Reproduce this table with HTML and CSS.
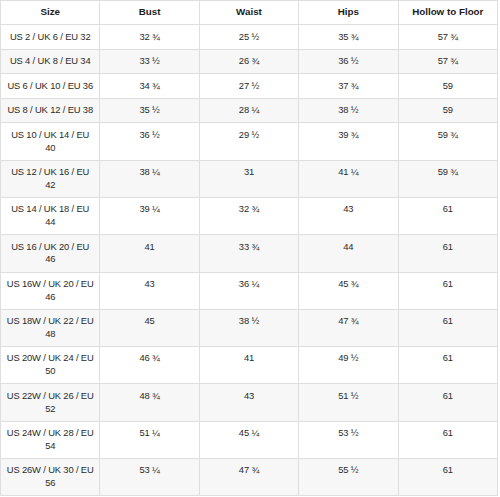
FILE: index.html
```html
<!DOCTYPE html>
<html>
<head>
<meta charset="utf-8">
<link rel="stylesheet" href="styles.css">
</head>
<body>
<table class="chart">
  <thead>
    <tr><th>Size</th><th>Bust</th><th>Waist</th><th>Hips</th><th>Hollow to Floor</th></tr>
  </thead>
  <tbody>
    <tr><td>US 2 / UK 6 / EU 32</td><td>32 ¾</td><td>25 ½</td><td>35 ¾</td><td>57 ¾</td></tr>
    <tr><td>US 4 / UK 8 / EU 34</td><td>33 ½</td><td>26 ¾</td><td>36 ½</td><td>57 ¾</td></tr>
    <tr><td>US 6 / UK 10 / EU 36</td><td>34 ¾</td><td>27 ½</td><td>37 ¾</td><td>59</td></tr>
    <tr><td>US 8 / UK 12 / EU 38</td><td>35 ½</td><td>28 ¼</td><td>38 ½</td><td>59</td></tr>
    <tr><td>US 10 / UK 14 / EU 40</td><td>36 ½</td><td>29 ½</td><td>39 ¾</td><td>59 ¾</td></tr>
    <tr><td>US 12 / UK 16 / EU 42</td><td>38 ¼</td><td>31</td><td>41 ¼</td><td>59 ¾</td></tr>
    <tr><td>US 14 / UK 18 / EU 44</td><td>39 ¼</td><td>32 ¾</td><td>43</td><td>61</td></tr>
    <tr><td>US 16 / UK 20 / EU 46</td><td>41</td><td>33 ¾</td><td>44</td><td>61</td></tr>
    <tr><td>US 16W / UK 20 / EU 46</td><td>43</td><td>36 ¼</td><td>45 ¾</td><td>61</td></tr>
    <tr><td>US 18W / UK 22 / EU 48</td><td>45</td><td>38 ½</td><td>47 ¾</td><td>61</td></tr>
    <tr><td>US 20W / UK 24 / EU 50</td><td>46 ¾</td><td>41</td><td>49 ½</td><td>61</td></tr>
    <tr><td>US 22W / UK 26 / EU 52</td><td>48 ¾</td><td>43</td><td>51 ½</td><td>61</td></tr>
    <tr><td>US 24W / UK 28 / EU 54</td><td>51 ¼</td><td>45 ¼</td><td>53 ½</td><td>61</td></tr>
    <tr><td>US 26W / UK 30 / EU 56</td><td>53 ¼</td><td>47 ¾</td><td>55 ½</td><td>61</td></tr>
  </tbody>
</table>
</body>
</html>
```
FILE: styles.css
```css
html, body {
  margin: 0;
  padding: 0;
  background: #ffffff;
}
.chart {
  width: 498px;
  table-layout: fixed;
  border-collapse: collapse;
  font-family: "Liberation Sans", Arial, sans-serif;
  font-size: 9.4px;
  letter-spacing: -0.15px;
  line-height: 12.8px;
  color: #2a2a2a;
}
.chart th, .chart td {
  border: 1px solid #dedede;
  padding: 5.35px 4.7px;
  text-align: center;
  vertical-align: top;
}
.chart th {
  font-size: 9.8px;
  letter-spacing: 0;
  font-weight: bold;
  color: #1c1c1c;
}
.chart tbody tr:nth-child(even) td {
  background: #f7f7f8;
}
```
